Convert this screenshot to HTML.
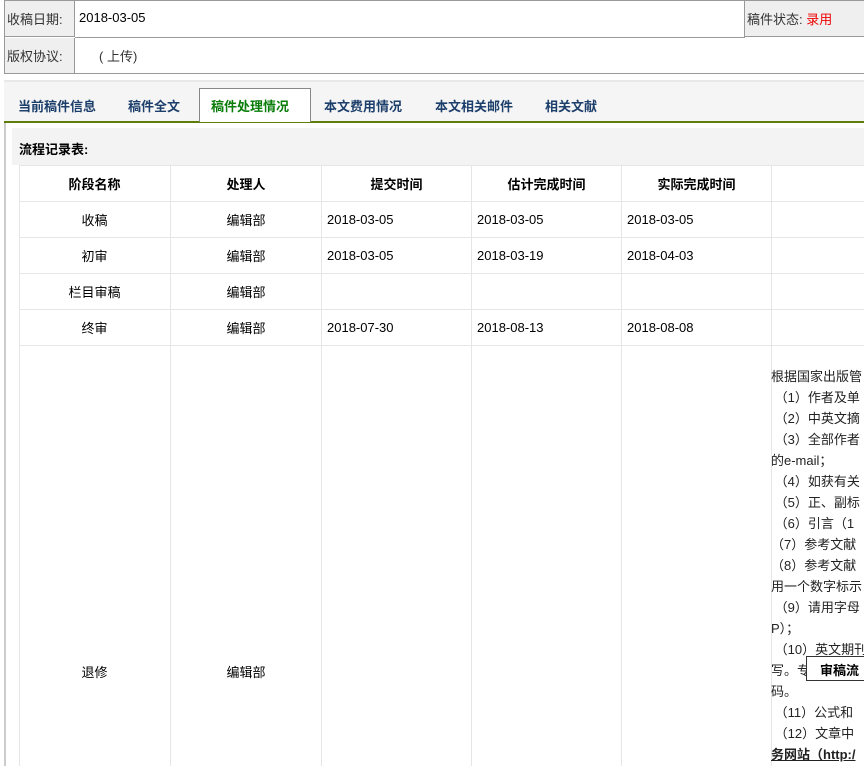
<!DOCTYPE html>
<html style="overflow:hidden;height:766px"><head><meta charset="utf-8"><style>
*{margin:0;padding:0;box-sizing:border-box}
body{width:864px;height:766px;overflow:hidden;background:#fff;font-family:"Liberation Sans","Noto Sans CJK SC",sans-serif;font-size:13px;color:#000;position:relative}
.a{position:absolute}
.lbl{background:#efefef;color:#333;}
.tab{position:absolute;top:96px;font-weight:bold;color:#1d3f6b;font-size:13px}
.c{position:absolute;border-right:1px solid #e6e6e6;border-bottom:1px solid #e6e6e6;display:flex;align-items:center}
.ctr{justify-content:center}
.l{padding-left:5px}
.tx{position:absolute;left:771px;top:366px;line-height:21px;white-space:nowrap;color:#222}
</style></head><body>
<div class="a" style="left:4px;top:0;width:862px;height:74px;border:1px solid #999"></div>
<div class="a lbl" style="left:5px;top:1px;width:70px;height:36px;border-right:1px solid #999;border-bottom:1px solid #999;padding:8px 0 0 2px">收稿日期:</div>
<div class="a" style="left:79px;top:10px">2018-03-05</div>
<div class="a lbl" style="left:744px;top:1px;width:122px;height:36px;border-left:1px solid #999;border-bottom:1px solid #999;padding:8px 0 0 2px">稿件状态: <span style="color:#e00">录用</span></div>
<div class="a" style="left:75px;top:37px;width:670px;height:1px;background:#999"></div>
<div class="a lbl" style="left:5px;top:38px;width:70px;height:35px;border-right:1px solid #999;padding:8px 0 0 2px">版权协议:</div>
<div class="a" style="left:99px;top:46px;color:#333">( 上传)</div>
<div class="a" style="left:4px;top:80px;width:862px;height:42px;background:#f5f5f5;border-top:2px solid #e8e8e8"></div>
<div class="a" style="left:4px;top:121px;width:862px;height:2px;background:#5f7d0a"></div>
<div class="a" style="left:199px;top:88px;width:112px;height:34px;background:#fff;border:1px solid #888;border-bottom:none"></div>
<div class="tab" style="left:18px">当前稿件信息</div>
<div class="tab" style="left:128px">稿件全文</div>
<div class="tab" style="left:211px;color:#0a7d0a">稿件处理情况</div>
<div class="tab" style="left:324px">本文费用情况</div>
<div class="tab" style="left:435px">本文相关邮件</div>
<div class="tab" style="left:545px">相关文献</div>
<div class="a" style="left:4px;top:123px;width:2px;height:643px;background:#ccc"></div>
<div class="a" style="left:12px;top:128px;width:852px;height:37px;background:#f3f3f3"></div>
<div class="a" style="left:19px;top:139px;font-weight:bold">流程记录表:</div>
<div class="a" style="left:19px;top:165px;width:845px;height:601px;border-left:1px solid #e6e6e6;border-top:1px solid #e6e6e6"></div>
<div class="c ctr" style="left:19px;top:165px;width:152px;height:37px;font-weight:bold">阶段名称</div>
<div class="c ctr" style="left:171px;top:165px;width:151px;height:37px;font-weight:bold">处理人</div>
<div class="c ctr" style="left:322px;top:165px;width:150px;height:37px;font-weight:bold">提交时间</div>
<div class="c ctr" style="left:472px;top:165px;width:150px;height:37px;font-weight:bold">估计完成时间</div>
<div class="c ctr" style="left:622px;top:165px;width:150px;height:37px;font-weight:bold">实际完成时间</div>
<div class="c" style="left:772px;top:165px;width:100px;height:37px"></div>

<div class="c ctr" style="left:19px;top:202px;width:152px;height:36px">收稿</div>
<div class="c ctr" style="left:171px;top:202px;width:151px;height:36px">编辑部</div>
<div class="c l" style="left:322px;top:202px;width:150px;height:36px">2018-03-05</div>
<div class="c l" style="left:472px;top:202px;width:150px;height:36px">2018-03-05</div>
<div class="c l" style="left:622px;top:202px;width:150px;height:36px">2018-03-05</div>
<div class="c" style="left:772px;top:202px;width:100px;height:36px"></div>

<div class="c ctr" style="left:19px;top:238px;width:152px;height:36px">初审</div>
<div class="c ctr" style="left:171px;top:238px;width:151px;height:36px">编辑部</div>
<div class="c l" style="left:322px;top:238px;width:150px;height:36px">2018-03-05</div>
<div class="c l" style="left:472px;top:238px;width:150px;height:36px">2018-03-19</div>
<div class="c l" style="left:622px;top:238px;width:150px;height:36px">2018-04-03</div>
<div class="c" style="left:772px;top:238px;width:100px;height:36px"></div>

<div class="c ctr" style="left:19px;top:274px;width:152px;height:36px">栏目审稿</div>
<div class="c ctr" style="left:171px;top:274px;width:151px;height:36px">编辑部</div>
<div class="c l" style="left:322px;top:274px;width:150px;height:36px"></div>
<div class="c l" style="left:472px;top:274px;width:150px;height:36px"></div>
<div class="c l" style="left:622px;top:274px;width:150px;height:36px"></div>
<div class="c" style="left:772px;top:274px;width:100px;height:36px"></div>

<div class="c ctr" style="left:19px;top:310px;width:152px;height:36px">终审</div>
<div class="c ctr" style="left:171px;top:310px;width:151px;height:36px">编辑部</div>
<div class="c l" style="left:322px;top:310px;width:150px;height:36px">2018-07-30</div>
<div class="c l" style="left:472px;top:310px;width:150px;height:36px">2018-08-13</div>
<div class="c l" style="left:622px;top:310px;width:150px;height:36px">2018-08-08</div>
<div class="c" style="left:772px;top:310px;width:100px;height:36px"></div>

<div class="c" style="left:19px;top:346px;width:152px;height:420px;border-bottom:none;justify-content:center;padding-top:0"><span style="position:absolute;top:316px">退修</span></div>
<div class="c" style="left:171px;top:346px;width:151px;height:420px;border-bottom:none;justify-content:center"><span style="position:absolute;top:316px">编辑部</span></div>
<div class="c" style="left:322px;top:346px;width:150px;height:420px;border-bottom:none"></div>
<div class="c" style="left:472px;top:346px;width:150px;height:420px;border-bottom:none"></div>
<div class="c" style="left:622px;top:346px;width:150px;height:420px;border-bottom:none"></div>

<div class="tx">根据国家出版管<br>&nbsp;（1）作者及单<br>&nbsp;（2）中英文摘<br>&nbsp;（3）全部作者<br>的e-mail；<br>&nbsp;（4）如获有关<br>&nbsp;（5）正、副标<br>&nbsp;（6）引言（1<br>（7）参考文献<br>（8）参考文献<br>用一个数字标示<br>&nbsp;（9）请用字母<br>P）；<br>&nbsp;（10）英文期刊<br>写。专<br>码。<br>&nbsp;（11）公式和<br>&nbsp;（12）文章中<br><b><u>务网站（http:/</u></b></div>
<div class="a" style="left:806px;top:656px;width:70px;height:25px;background:#fff;border:1px solid #333;padding:3px 0 0 13px;font-weight:bold">审稿流</div>
</body></html>
